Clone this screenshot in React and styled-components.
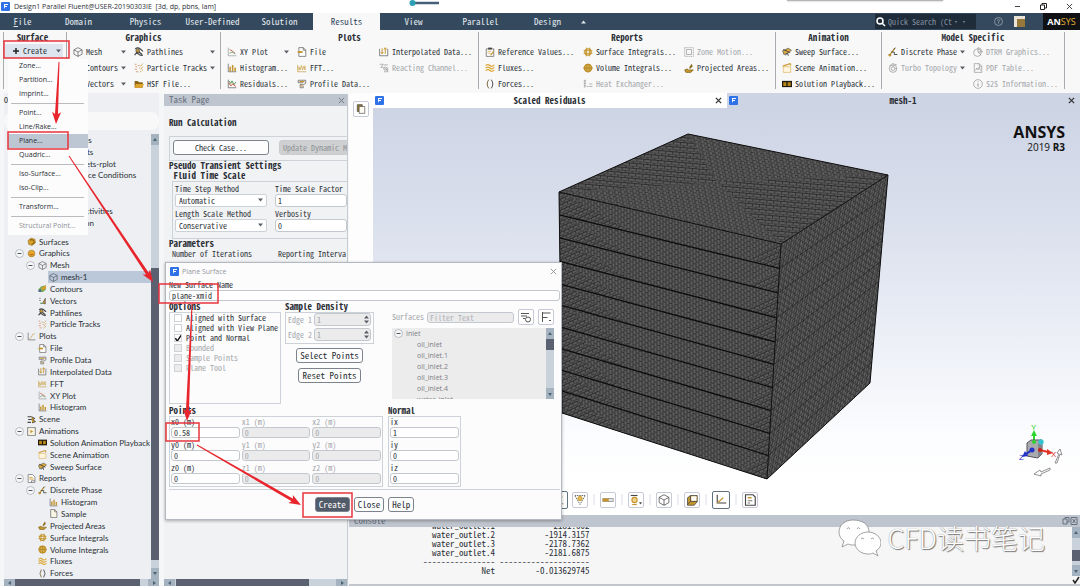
import React from "react";
import styled, { createGlobalStyle, ThemeProvider, css } from "styled-components";

const theme = {
  mono: '"Noto Sans Mono CJK SC", "Liberation Mono", monospace',
  sans: '"Open Sans", "Noto Sans", sans-serif',
  tree: 'Lato, "Open Sans", sans-serif',
  navy: "#34495e",
  text: "#2b2f36",
  muted: "#a3a6aa",
  line: "#cdd1d8",
  bar: "#bfc5ce",
  panel: "#edeff2",
  thumb: "#5b6171",
};

const GlobalStyle = createGlobalStyle`
  * { box-sizing: border-box; }
  body { margin: 0; background: #f5f6f8; overflow: hidden; }
  button, input, select { font: inherit; color: inherit; margin: 0; }
  fieldset { margin: 0; padding: 0; border: 0; min-width: 0; }
  svg { display: block; flex: none; }
`;

const Page = styled.div`
  position: relative;
  display: flex;
  flex-direction: column;
  min-height: 100vh;
  font-family: ${p => p.theme.mono};
  font-size: 8px;
  line-height: 10px;
  color: ${p => p.theme.text};
`;

/* ---------- icons ---------- */

const G = "#c4952e";
const K = "#454545";

const Bars = (
  <>
    <path d="M2 1v13h13" stroke={K} />
    <path d="M5 13V6M9 13V3M13 13V7" stroke={G} strokeWidth="2.5" />
  </>
);
const Cube = <path d="M8 1l6.500 3.500v7L8 15l-6.500-3.500v-7zM1.500 4.500L8 8l6.500-3.500M8 8v7" stroke={K} />;

const drawings = {
  mesh: Cube,
  pathlines: (
    <>
      <path d="M2 3q4-3 8 0t4 4" stroke={K} strokeWidth="2" />
      <path d="M1 13q3-5 6-2t7 2" stroke={K} strokeWidth="2" />
      <circle cx="6" cy="6" r="3" fill={G} stroke={K} />
      <path d="M8 8l5 4M3 10l3-2" stroke={K} strokeWidth="2" />
    </>
  ),
  tracks: (
    <>
      <path d="M1 2h3M6 4h3M2 6h3M1 10h4M8 8h2M3 14h4" stroke="#d9a07c" strokeWidth="1.500" />
      <path d="M14 1l-4 5M14 6l-3 4M14 11l-5 4" stroke={G} strokeWidth="1.500" strokeDasharray="2 1" />
    </>
  ),
  folder: (
    <>
      <path d="M1 3h5l2 2h6v9H1z" fill="#8a6412" />
      <path d="M3 8h13l-3 6H1z" fill="#e0a52c" />
    </>
  ),
  xy: (
    <>
      <path d="M2 1v13h13" stroke="#8b8b8b" />
      <path d="M4 4l4 2 5 4" stroke="#cf6a5c" strokeWidth="1.500" />
      <path d="M4 10l4-2 5 3" stroke="#7aa37a" strokeWidth="1.500" />
    </>
  ),
  axes: (
    <>
      <path d="M2 1v13h13" stroke={K} />
      <path d="M4 12l4-3 2-5 4-1" stroke={G} />
    </>
  ),
  triad: (
    <>
      <path d="M3 1v11h12" stroke={K} strokeWidth="1.500" />
      <path d="M3 12l8-7" stroke={G} strokeWidth="1.500" />
    </>
  ),
  hist: Bars,
  resid: (
    <>
      <path d="M2 1v13h13" stroke={K} />
      <path d="M3 3l3 4 2-4 3 6 3-4" stroke="#4f8f4f" strokeWidth="1.500" />
      <path d="M3 6l3 5 3-3 5 4" stroke="#cc4a3b" strokeWidth="1.500" />
    </>
  ),
  file: (
    <>
      <path d="M3 1h7l4 4v10H3z" fill="#fff" stroke={K} />
      <path d="M10 1v4h4" stroke={K} />
      <path d="M1 8h8" stroke={G} strokeWidth="3" />
    </>
  ),
  sample: (
    <>
      <path d="M3 1h7l4 4v10H3z" fill="#fbf7e6" stroke={K} />
      <path d="M10 1v4h4" stroke={K} />
    </>
  ),
  fft: (
    <>
      <path d="M1 3v11h14" stroke={G} />
      <path d="M3 12V6l2 5 2-7 2 7 2-6 2 6V4" stroke={G} />
    </>
  ),
  profile: (
    <>
      <path d="M2 2h12v5q-3 3-9 2M2 2v4h8M5 9v5h5v-3" stroke={K} />
      <path d="M4 4h8M6 11h3" stroke={G} strokeWidth="2" />
    </>
  ),
  interp: (
    <>
      <path d="M1 3v11h13V3" stroke={K} />
      <path d="M5 2v8M3 8l2 3 2-3M10 2v9M8 4l2-3 2 3" stroke={G} strokeWidth="1.500" />
    </>
  ),
  react: (
    <>
      <path d="M1 2h6l-4 5h4M8 3h6M8 7l6 6M14 7v7H8" stroke={K} />
      <circle cx="10" cy="9" r="2.500" stroke={K} />
    </>
  ),
  clipboard: (
    <>
      <path d="M2 3h12v12H2z" fill="#fff" stroke={K} />
      <path d="M5 1h6v3H5z" fill={K} />
      <path d="M4 7h6M4 10h5" stroke={G} />
      <path d="M9 13l5-6" stroke={G} strokeWidth="2" />
    </>
  ),
  fluxes: <path d="M1 4q4-3 7 0t7-1M1 8q4-3 7 0t7-1M1 12q4-3 7 0t7-1" stroke="#dca93c" strokeWidth="2" />,
  forces: (
    <>
      <path d="M6 1Q1 8 6 15" stroke="#776336" strokeWidth="1.500" />
      <path d="M10 1q5 7 0 14" stroke={K} strokeWidth="1.500" />
    </>
  ),
  surfInt: (
    <>
      <circle cx="8" cy="8" r="5" stroke={G} strokeWidth="2" />
      <path d="M6 1L5 15M11 1l-1 14M1 6h14M1 10h14" stroke={G} strokeWidth="1.500" />
    </>
  ),
  volInt: (
    <>
      <circle cx="8" cy="8" r="6" fill="#e3b651" stroke={G} strokeWidth="2" />
      <path d="M5 2v12M8 1v14M11 2v12M0 8h16" stroke="#a07a1d" />
    </>
  ),
  heat: <path d="M3 1v13M1 3h4M1 7h4M1 11h4M6 12h3M10 8h5M10 12h5" stroke={K} />,
  zone: (
    <>
      <path d="M1 1h14v14H1z" stroke={K} strokeDasharray="2 1" />
      <path d="M4 4h8v8H4z" stroke={K} />
    </>
  ),
  area: (
    <>
      <path d="M1 11q5-3 6 0h8l-4 4H3z" fill={G} stroke="#74570f" />
      <path d="M12 1l2 4-4 4-2-1z" fill="#8a6a1c" />
    </>
  ),
  sweep: (
    <>
      <path d="M1 6l9-4 5 3-4 4-8 3z" fill="#dba93f" stroke={K} />
      <path d="M2 4l11 5M5 13l4-3 1 4" stroke={K} strokeWidth="1.500" />
    </>
  ),
  sceneAnim: (
    <>
      <path d="M2 6h12v9H2z" fill="#fff5dd" stroke="#dcae5a" />
      <path d="M1 5l12-4 1 3" stroke="#d29c38" strokeWidth="2" />
    </>
  ),
  playback: (
    <>
      <path d="M0 3h16v10H0z" fill="#1e1a10" />
      <path d="M2 5h5v6H2zM9 5h5v6H9z" fill="#b88617" />
      <path d="M0 4h16M0 12h16" stroke="#1e1a10" strokeDasharray="1 1" />
    </>
  ),
  discrete: (
    <>
      <path d="M2 14l5-7 4-5" stroke={G} strokeWidth="2" />
      <path d="M1 12h4M5 8h5v4h5M9 4l3-3" stroke={K} strokeWidth="1.500" />
      <circle cx="3" cy="13" r="2" fill={G} />
    </>
  ),
  turbo: (
    <>
      <circle cx="8" cy="9" r="6" stroke={K} />
      <circle cx="8" cy="9" r="3" stroke={K} />
      <path d="M2 5l5-4 7 2M8 3v3M14 9h-3" stroke={K} />
    </>
  ),
  pie: (
    <>
      <circle cx="7" cy="9" r="6" stroke={K} />
      <path d="M8 8V1q6 1 7 7H8l5 5" stroke={K} />
    </>
  ),
  pdf: (
    <>
      <path d="M2 1h8l4 4v10H2z" stroke={K} />
      <path d="M4 12l2-4 2 3 2-5 2 6M10 1v4h4" stroke={K} />
    </>
  ),
  info: (
    <>
      <circle cx="8" cy="8" r="7" stroke={K} />
      <path d="M8 7v5M8 4v1" stroke={K} strokeWidth="1.500" />
    </>
  ),
  surfaces: (
    <>
      <path d="M2 6l5-4 7 2 1 6-6 5-6-2z" fill="#dca22e" stroke="#8b6410" />
      <path d="M5 6q4-3 7 1t-4 6" stroke="#8b6410" strokeWidth="2" />
    </>
  ),
  graphics: (
    <>
      <circle cx="8" cy="8" r="6" fill="#e9a626" stroke="#96752f" />
      <path d="M4 9q4 5 9 0" fill="#b96c2c" />
    </>
  ),
  contours: (
    <>
      <path d="M1 14V9l5-5 8-2v8l-5 4z" fill="#7fae5a" />
      <path d="M6 7l8-5v6l-5 3z" fill="#dd9c2a" />
      <path d="M1 14v-4l4-1 1 5z" fill="#4b6d8f" />
    </>
  ),
  vectors: (
    <>
      <path d="M2 4h3M2 8h3M8 13l5-9v10z" fill={G} stroke={K} />
      <path d="M4 13h4" stroke="#5b9055" strokeWidth="2" />
    </>
  ),
  scene: (
    <>
      <path d="M1 3h7M2 8h8M1 13h6" stroke={K} strokeWidth="2" />
      <path d="M8 3l6 3-3 2 4 4-6 2" fill={G} stroke={K} strokeWidth="1.500" />
    </>
  ),
  animations: (
    <>
      <path d="M1 1h14v14H1z" fill="#fbf7e6" stroke={K} />
      <path d="M6 5l5 3-5 3z" fill={G} />
      <path d="M3 2v12M13 2v12" stroke="#999" strokeDasharray="1 2" />
    </>
  ),
  reports: (
    <>
      <path d="M2 1h8l4 4v10H2z" fill="#fff" stroke={K} />
      <path d="M4 6h6M4 9h8" stroke={G} strokeWidth="1.500" />
      <path d="M8 15v-3h6" stroke={K} />
    </>
  ),
  funnel: (
    <>
      <path d="M1 2h14L8 14z" stroke={K} strokeDasharray="2 1" />
      <circle cx="8" cy="6" r="3" fill="#e3b651" stroke={G} />
    </>
  ),
  ruler: (
    <>
      <path d="M1 6h14v4H1z" fill="#e4e4e4" stroke="#888" />
      <path d="M1 6h8v4H1z" fill={G} />
    </>
  ),
  probe: (
    <>
      <path d="M1 2h9" stroke={K} strokeWidth="1.500" />
      <circle cx="6" cy="8" r="3.500" fill="#f2d38e" stroke={G} strokeWidth="1.500" />
      <path d="M3 14h6" stroke={G} strokeWidth="1.500" />
      <path d="M12 11l4 0-2 3z" fill={K} />
    </>
  ),
  solid: (
    <>
      <path d="M2 5l4-3h9v8l-4 5H2z" fill={G} stroke={K} />
      <path d="M6 2v8h9M6 10l-4 4" stroke={K} />
      <path d="M7 3h7v6H7z" fill="#fff" />
    </>
  ),
  legend: (
    <>
      <path d="M2 1h10l3 3v11H2z" fill="#fff" stroke={K} strokeWidth="1.500" />
      <path d="M5 5h5" stroke={G} strokeWidth="2" />
      <path d="M5 9h6M5 12h3" stroke={K} />
    </>
  ),
  pages: (
    <>
      <path d="M2 1h8v11H2z" fill="#8f7332" stroke={K} />
      <path d="M5 4h9v11H5z" fill="#fdfaf0" stroke={K} />
    </>
  ),
};

const Icon = ({ name, size = 10, dim }) => (
  <svg width={size} height={size} viewBox="0 0 16 16" fill="none" strokeWidth="1" opacity={dim ? 0.6 : 1} aria-hidden="true">
    {drawings[name]}
  </svg>
);

const AppIcon = ({ size = 9 }) => (
  <svg width={size} height={size} viewBox="0 0 9 9" aria-hidden="true">
    <rect width="9" height="9" rx="1" fill="#2f72e8" />
    <path d="M3 2h4v1H4v1h2v1H4l-1 2z" fill="#fff" />
  </svg>
);

const Caret = ({ up, color = "#5a5f66" }) => (
  <svg width="5" height="4" viewBox="0 0 5 4" aria-hidden="true">
    <path d={up ? "M0 3.500h5L2.500.5z" : "M0 .5h5L2.500 3.500z"} fill={color} />
  </svg>
);

const Cross = ({ size = 7, color = "#333", weight = 1 }) => (
  <svg width={size} height={size} viewBox="0 0 8 8" aria-hidden="true">
    <path d="M1 1l6 6M7 1L1 7" stroke={color} strokeWidth={weight} />
  </svg>
);

/* ---------- title bar and tabs ---------- */

const TitleBar = styled.header`
  display: flex;
  align-items: center;
  gap: 4px;
  height: 13px;
  padding: 0 7px 0 1px;
  background: #fff;
  font-family: ${p => p.theme.sans};
  font-size: 7px;
  white-space: pre;
`;

const Spring = styled.div`
  flex: 1;
`;

const WindowButtons = styled.div`
  display: flex;
  gap: 19px;
`;

const BareButton = styled.button`
  display: flex;
  align-items: center;
  justify-content: center;
  padding: 0;
  border: 0;
  background: none;
`;

const Progress = styled.div`
  position: absolute;
  top: 0;
  left: 409px;
`;

const TopEdge = styled.div`
  position: absolute;
  top: 0;
  right: 137px;
  width: 156px;
  height: 1px;
  background: #b5b5b5;
  box-shadow: 0 0 2px #999;
`;

const TabBar = styled.nav`
  display: flex;
  align-items: stretch;
  height: 17px;
  background: ${p => p.theme.navy};
  color: #e3e9ef;
  font-size: 9px;
`;

const Tab = styled.button`
  width: ${p => (p.$first ? "45px" : "67px")};
  padding: 0;
  border: 0;
  border-radius: 0;
  background: ${p => (p.$active ? "#f8f8f9" : "none")};
  color: ${p => (p.$active ? p.theme.navy : "inherit")};
  &:first-letter {
    text-decoration: ${p => (p.$first ? "underline" : "none")};
  }
`;

const Search = styled.label`
  display: flex;
  align-items: center;
  gap: 2px;
  width: 101px;
  margin: 1px 3px 1px 0;
  padding: 0 1px;
  background: #1e2c3a;
  font-size: 8px;
  input {
    width: 80px;
    height: 12px;
    padding: 0;
    border: 0;
    background: none;
    outline: none;
  }
  input::placeholder {
    color: #8592a0;
  }
`;

const TabTools = styled.div`
  display: flex;
  align-items: center;
  gap: 11px;
  padding: 0 18px 0 15px;
`;

const Brand = styled.div`
  display: flex;
  align-items: center;
  justify-content: center;
  width: 37px;
  background: #101114;
  color: #fff;
  font: bold 9px ${p => p.theme.sans};
  b {
    color: #e2ad35;
    font-weight: 400;
  }
`;

/* ---------- ribbon ---------- */

const RibbonBar = styled.div`
  display: flex;
  height: 63px;
  padding: 2px 0 4px 3px;
  background: #f8f8f9;
`;

const Group = styled.section`
  flex: ${p => p.$size} 1 ${p => p.$size}px;
  min-width: 0;
  padding-left: ${p => (p.$tight ? "1px" : "6px")};
  border-left: 1px solid #a8abb0;
  white-space: nowrap;
`;

const GroupTitle = styled.h2`
  height: 12px;
  margin: 0;
  padding-right: 6px;
  font-size: 9px;
  font-weight: bold;
  line-height: 12px;
  text-align: center;
`;

const Columns = styled.div`
  display: grid;
  grid-template-columns: ${p => p.$cols};
`;

const Command = styled.button`
  display: flex;
  align-items: center;
  gap: 3px;
  width: 100%;
  height: 16px;
  padding: 0 8px 0 0;
  border: 0;
  background: none;
  color: ${p => (p.disabled ? p.theme.muted : p.theme.text)};
  svg:last-child:not(:first-child) {
    margin-left: auto;
  }
`;

const CreateCommand = styled(Command)`
  width: 58px;
  height: 14px;
  padding: 0 2px 0 7px;
  background: #dfe5ee;
`;

// label, icon, [menu | off]
const groups = [
  {
    title: "Graphics", size: 154, cols: "61px 1fr",
    columns: [
      [["Mesh", "mesh", "menu"], ["Contours", "contours", "menu"], ["Vectors", "vectors", "menu"]],
      [["Pathlines", "pathlines", "menu"], ["Particle Tracks", "tracks", "menu"], ["HSF File...", "folder"]],
    ],
  },
  {
    title: "Plots", size: 258, cols: "70px 82px 1fr",
    columns: [
      [["XY Plot", "xy", "menu"], ["Histogram...", "hist"], ["Residuals...", "resid"]],
      [["File", "file"], ["FFT...", "fft"], ["Profile Data...", "profile"]],
      [["Interpolated Data...", "interp"], ["Reacting Channel...", "react", "off"]],
    ],
  },
  {
    title: "Reports", size: 297, cols: "98px 101px 1fr",
    columns: [
      [["Reference Values...", "clipboard"], ["Fluxes...", "fluxes"], ["Forces...", "forces"]],
      [["Surface Integrals...", "surfInt"], ["Volume Integrals...", "volInt"], ["Heat Exchanger...", "heat", "off"]],
      [["Zone Motion...", "zone", "off"], ["Projected Areas...", "area"]],
    ],
  },
  {
    title: "Animation", size: 106, cols: "1fr",
    columns: [[["Sweep Surface...", "sweep"], ["Scene Animation...", "sceneAnim"], ["Solution Playback...", "playback"]]],
  },
  {
    title: "Model Specific", size: 183, cols: "85px 1fr",
    columns: [
      [["Discrete Phase", "discrete", "menu"], ["Turbo Topology", "turbo", "menu off"]],
      [["DTRM Graphics...", "pie", "off"], ["PDF Table...", "pdf", "off"], ["S2S Information...", "info", "off"]],
    ],
  },
];

const Ribbon = () => (
  <RibbonBar>
    <Group $size={63} $tight>
      <GroupTitle>Surface</GroupTitle>
      <CreateCommand>
        <svg width="8" height="8" viewBox="0 0 8 8"><path d="M4 1v6M1 4h6" stroke="#222" strokeWidth="1.500" /></svg>
        Create
        <Caret />
      </CreateCommand>
    </Group>
    {groups.map(g => (
      <Group key={g.title} $size={g.size}>
        <GroupTitle>{g.title}</GroupTitle>
        <Columns $cols={g.cols}>
          {g.columns.map((col, i) => (
            <div key={i}>
              {col.map(([label, icon, flags = ""]) => (
                <Command key={label} disabled={flags.includes("off")}>
                  <Icon name={icon} dim={flags.includes("off")} />
                  {label}
                  {flags.includes("menu") && <Caret />}
                </Command>
              ))}
            </div>
          ))}
        </Columns>
      </Group>
    ))}
    <Group $size={16} />
  </RibbonBar>
);

/* ---------- create menu ---------- */

const Menu = styled.div`
  position: absolute;
  top: 59px;
  left: 8px;
  width: 80px;
  padding: 0 0 2px;
  background: #fcfcfd;
  font-family: ${p => p.theme.sans};
  font-size: 7px;
`;

const MenuItem = styled.button`
  display: block;
  width: 100%;
  height: 14px;
  padding: 0 0 0 11px;
  border: 0;
  background: ${p => (p.$active ? "#bcc7d3" : "none")};
  color: ${p => (p.disabled ? "#8f9296" : p.theme.text)};
  text-align: left;
  white-space: nowrap;
`;

const MenuLine = styled.hr`
  height: 1px;
  margin: 2px 4px 2px 3px;
  border: 0;
  background: #b9bbbe;
`;

const menuItems = [
  "Zone...", "Partition...", "Imprint...", "-", "Point...", "Line/Rake...", "Plane...", "Quadric...", "-",
  "Iso-Surface...", "Iso-Clip...", "-", "Transform...", "-", "Structural Point...",
];

const CreateMenu = () => (
  <Menu>
    {menuItems.map((item, i) =>
      item === "-"
        ? <MenuLine key={i} />
        : <MenuItem key={item} $active={item === "Plane..."} disabled={item === "Structural Point..."}>{item}</MenuItem>
    )}
  </Menu>
);

/* ---------- scrollbars ---------- */

const Track = styled.div`
  display: flex;
  flex-direction: ${p => (p.$row ? "row" : "column")};
  flex: none;
  ${p => (p.$row ? css`height: 8px;` : css`width: 8px;`)}
  background: #c9d1da;
`;

const TrackEnd = styled(BareButton)`
  flex: none;
  width: ${p => (p.$row ? "11px" : "8px")};
  height: ${p => (p.$row ? "8px" : "11px")};
  background: #a4b3bf;
`;

const Thumb = styled.div`
  flex: ${p => p.$size};
  background: ${p => p.theme.thumb};
`;

const Slack = styled.div`
  flex: ${p => p.$size};
`;

const Tip = ({ d }) => (
  <svg width="4" height="4" viewBox="0 0 4 4" aria-hidden="true"><path d={d} fill="#4c6474" /></svg>
);

const Scrollbar = ({ row, before, thumb, after }) => (
  <Track $row={row}>
    <TrackEnd $row={row} type="button" aria-label="Back"><Tip d={row ? "M3 0v4L0 2z" : "M0 3h4L2 0z"} /></TrackEnd>
    <Slack $size={before} />
    <Thumb $size={thumb} />
    <Slack $size={after} />
    <TrackEnd $row={row} type="button" aria-label="Forward"><Tip d={row ? "M1 0v4l3-2z" : "M0 1h4L2 4z"} /></TrackEnd>
  </Track>
);

/* ---------- outline tree ---------- */

const Body = styled.main`
  display: grid;
  grid-template-columns: 164px 185px 1fr;
  flex: 1;
  min-height: 0;
  border-bottom: 1px solid #4a4f57;
`;

const Outline = styled.aside`
  display: flex;
  flex-direction: column;
  min-width: 0;
  margin: 0 5px 0 4px;
  background: ${p => p.theme.panel};
`;

const OutlineTitle = styled.div`
  height: 19px;
  padding-top: 2px;
`;

const OutlineFilter = styled.input`
  width: 100%;
  height: 18px;
  margin-bottom: 4px !important;
  padding: 0 6px;
  border: 0;
  border-radius: 8px;
  background: #f8f8f9;
`;

const OutlineMain = styled.div`
  display: flex;
  flex: 1;
  min-height: 0;
`;

const Tree = styled.div`
  display: flex;
  flex-direction: column;
  flex: 1;
  min-width: 0;
  font-family: ${p => p.theme.tree};
  font-size: 8px;
  white-space: nowrap;
  overflow: hidden;
`;

const TreeGap = styled.div`
  flex: 7;
`;

const TreeRow = styled.div`
  display: flex;
  align-items: center;
  flex: 12;
  gap: 3px;
  min-height: 0;
  margin-left: ${p => 11 + p.$depth * 11}px;
  ${p => p.$selected && css`
    margin-left: ${11 + (p.$depth + 1) * 11}px;
    padding-left: 1px;
    background: #bac8d9;
  `}
`;

const Toggle = styled.span`
  display: flex;
  flex: none;
  width: 9px;
`;

const Minus = ({ size = 9 }) => (
  <svg width={size} height={size} viewBox="0 0 9 9" aria-hidden="true">
    <circle cx="4.500" cy="4.500" r="4" fill="#f6f7f8" stroke="#a2a8b0" strokeWidth=".7" />
    <path d="M2.500 4.500h4" stroke="#555" />
  </svg>
);

const upperRows = [
  [1, "Report Files"], [1, "Report Plots"], [3, "outlets-rplot"], [1, "Convergence Conditions"],
  [0, ""], [0, ""], [0, "Calculation Activities"], [0, "Run Calculation"],
];

const lowerRows = [
  [0, "Surfaces", "surfaces"],
  [0, "Graphics", "graphics", true],
  [1, "Mesh", "mesh", true],
  [2, "mesh-1", "mesh"],
  [1, "Contours", "contours"],
  [1, "Vectors", "vectors"],
  [1, "Pathlines", "pathlines"],
  [1, "Particle Tracks", "tracks"],
  [0, "Plots", "axes", true],
  [1, "File", "file"],
  [1, "Profile Data", "profile"],
  [1, "Interpolated Data", "interp"],
  [1, "FFT", "fft"],
  [1, "XY Plot", "xy"],
  [1, "Histogram", "hist"],
  [0, "Scene", "scene"],
  [0, "Animations", "animations", true],
  [1, "Solution Animation Playback", "playback"],
  [1, "Scene Animation", "sceneAnim"],
  [1, "Sweep Surface", "sweep"],
  [0, "Reports", "reports", true],
  [1, "Discrete Phase", "discrete", true],
  [2, "Histogram", "hist"],
  [2, "Sample", "sample"],
  [1, "Projected Areas", "area"],
  [1, "Surface Integrals", "surfInt"],
  [1, "Volume Integrals", "volInt"],
  [1, "Fluxes", "fluxes"],
  [1, "Forces", "forces"],
];

const renderRow = ([depth, label, icon, open], i) => {
  const selected = label === "mesh-1";
  return (
    <TreeRow key={i} $depth={depth} $selected={selected}>
      {!selected && <Toggle>{open && <Minus />}</Toggle>}
      <Icon name={icon} size={9} />
      {label}
    </TreeRow>
  );
};

/* ---------- task page ---------- */

const Task = styled.section`
  display: flex;
  flex-direction: column;
  min-width: 0;
  margin: 1px 1px 0 0;
  background: #f1f2f4;
  border-right: 1px solid #c6cbd2;
  white-space: nowrap;
  overflow: hidden;
`;

const PanelBar = styled.div`
  display: flex;
  align-items: center;
  justify-content: space-between;
  flex: none;
  height: 12px;
  padding: 0 2px 0 5px;
  background: ${p => p.theme.bar};
  color: #667180;
  font-size: 9px;
`;

const TaskBody = styled.div`
  flex: 1;
  min-width: 0;
  padding: 12px 0 0 5px;
  overflow: hidden;
`;

const Heading = styled.h3`
  height: 10px;
  margin: 0;
  font-size: 9px;
  line-height: 10px;
  font-weight: bold;
`;

const Frame = styled.div`
  border: 1px solid ${p => p.theme.line};
  border-right-width: ${p => (p.$open ? 0 : "1px")};
`;

const CaseRow = styled(Frame)`
  display: flex;
  gap: 10px;
  margin-top: 8px;
  padding: 3px 0 5px 3px;
`;

const Button = styled.button`
  height: 15px;
  padding: 0 3px;
  border: 1px solid #7d838d;
  border-radius: 3px;
  background: ${p => (p.$primary ? "#515b69" : "#fdfdfd")};
  color: ${p => (p.$primary ? "#fff" : p.theme.text)};
  font-size: ${p => (p.$small ? "8px" : "9px")};
  line-height: 12px;
  white-space: nowrap;
  &:disabled {
    border-color: #c9cbce;
    background: #cfd0d2;
    color: #8e9195;
  }
`;

const WideButton = styled(Button)`
  flex: 0 0 96px;
`;

const SettingsFrame = styled(Frame)`
  display: grid;
  grid-template-columns: 92px 1fr;
  column-gap: 8px;
  margin-left: 3px;
  padding: 1px 0 5px 2px;
`;

const Field = styled.label`
  display: flex;
  flex-direction: column;
  min-width: 0;
  height: 25px;
  line-height: 11px;
  color: ${p => (p.$off ? p.theme.muted : "inherit")};
`;

const SelectBox = styled.span`
  position: relative;
  display: block;
  select {
    appearance: none;
    width: 100%;
    height: 13px;
    padding: 0 3px;
    border: 1px solid ${p => p.theme.line};
    border-radius: 2px;
    background: #fff;
  }
  svg {
    position: absolute;
    top: 4px;
    right: 4px;
  }
`;

const TextBox = styled.input`
  width: 100%;
  min-width: 0;
  height: ${p => (p.$tall ? "13px" : "11px")};
  padding: 0 2px;
  border: 1px solid #c3c7ce;
  border-radius: 3px;
  background: #fff;
  line-height: 9px;
  outline: none;
  &:disabled {
    background: #ebebec;
    color: ${p => p.theme.muted};
  }
  &::placeholder {
    color: #b0b2b5;
  }
`;

const ParamRow = styled.div`
  display: grid;
  grid-template-columns: 106px 1fr;
  padding-left: 3px;
`;

const TaskPage = () => (
  <Task>
    <PanelBar>Task Page<Cross color="#667180" /></PanelBar>
    <TaskBody>
      <Heading>Run Calculation</Heading>
      <CaseRow $open>
        <WideButton $small>Check Case...</WideButton>
        <WideButton $small disabled>Update Dynamic Mesh...</WideButton>
      </CaseRow>
      <Heading>Pseudo Transient Settings</Heading>
      <Heading as="h4">&nbsp;Fluid Time Scale</Heading>
      <SettingsFrame $open>
        <Field>
          Time Step Method
          <SelectBox><select defaultValue="Automatic"><option>Automatic</option></select><Caret /></SelectBox>
        </Field>
        <Field>Time Scale Factor<TextBox $tall defaultValue="1" /></Field>
        <Field>
          Length Scale Method
          <SelectBox><select defaultValue="Conservative"><option>Conservative</option></select><Caret /></SelectBox>
        </Field>
        <Field>Verbosity<TextBox $tall defaultValue="0" /></Field>
      </SettingsFrame>
      <Heading>Parameters</Heading>
      <ParamRow><span>Number of Iterations</span><span>Reporting Interval</span></ParamRow>
    </TaskBody>
    <Scrollbar row before={1} thumb={132} after={27} />
  </Task>
);

/* ---------- graphics view ---------- */

const Right = styled.section`
  display: flex;
  flex-direction: column;
  min-width: 0;
`;

const ViewRow = styled.div`
  display: flex;
  flex: 1;
  min-height: 0;
`;

const SideTools = styled.div`
  flex: none;
  width: 24px;
  padding: 8px 0 0 4px;
  background: #fdfdfe;
`;

const ToolButton = styled.button`
  display: flex;
  align-items: center;
  justify-content: center;
  width: ${p => (p.$active ? "18px" : "16px")};
  height: ${p => (p.$active ? "18px" : "16px")};
  padding: 0;
  border: 1px solid ${p => (p.$active ? "#5f7280" : "#c5cad6")};
  border-radius: 2px;
  background: #fff;
`;

const Viewer = styled.div`
  display: flex;
  flex-direction: column;
  flex: 1;
  min-width: 0;
  background: linear-gradient(#cdd4e4 14px, #dce1ee 140px, #fbfcfe 340px, #fff 390px);
`;

const Titles = styled.div`
  display: grid;
  grid-template-columns: 354px 1fr;
  height: 15px;
`;

const WindowTitle = styled.div`
  display: flex;
  align-items: center;
  justify-content: space-between;
  padding: 0 5px 0 2px;
  background: ${p => (p.$light ? "#fff" : "none")};
  font-size: 9px;
  font-weight: bold;
`;

const Stage = styled.div`
  display: flex;
  flex: 1;
  justify-content: flex-end;
  min-height: 0;
  overflow: hidden;
`;

const ViewTools = styled.div`
  display: flex;
  align-items: center;
  gap: 5px;
  height: 31px;
  padding: 0 0 0 177px;
  background: #fff;
`;

const Pair = styled.div`
  display: flex;
  align-items: center;
  gap: 4px;
`;

const Divider = styled.i`
  width: 2px;
  height: 11px;
  background: #eceef2;
`;

const lerp = (a, b, t) => a.map((v, i) => v + (b[i] - v) * t);
const pts = list => list.map(p => p.join(",")).join(" ");
const left = [559, 192];
const back = [688, 134];
const rightTop = [888, 175];
const front = [781, 244];
const frontLow = [767, 479];
const rightLow = [870, 383];
const leftLow = [562, 413];
const middle = [717, 182];
const levels = [0.104, 0.208, 0.314, 0.417, 0.512, 0.611, 0.709, 0.806, 0.9];

const MeshScene = () => (
  <svg width="707" height="376" viewBox="373 108 707 376" role="img" aria-label="Meshed block">
    <defs>
      <pattern id="faceLeft" width="6" height="10" patternUnits="userSpaceOnUse" patternTransform="skewY(13)">
        <rect width="6" height="10" fill="#5d5d5d" />
        <path d="M0 0v10M3 0v10M6 0v10M0 1h3M0 6h3M3 3.500h3M3 8.500h3" stroke="#2c2c2c" strokeWidth=".8" />
      </pattern>
      <pattern id="faceRight" width="5" height="5" patternUnits="userSpaceOnUse" patternTransform="skewY(-39) rotate(12)">
        <rect width="5" height="5" fill="#5d5d5d" />
        <path d="M0 0v5M2.500 0v5M0 1h2.500M2.500 3.500h2.500" stroke="#262626" strokeWidth=".8" />
      </pattern>
      <pattern id="topA" width="6" height="8" patternUnits="userSpaceOnUse" patternTransform="skewX(8) rotate(-4)">
        <rect width="6" height="8" fill="#5e5e5e" />
        <path d="M0 0v8M3 0v8M0 1h3M0 5h3M3 3h3M3 7h3" stroke="#2c2c2c" strokeWidth=".8" />
      </pattern>
      <pattern id="topB" width="7" height="5" patternUnits="userSpaceOnUse" patternTransform="rotate(5)">
        <rect width="7" height="5" fill="#5a5a5a" />
        <path d="M0 0h7M0 2.500h7M1 0v2.500M4.500 2.500v2.500" stroke="#262626" strokeWidth=".8" />
      </pattern>
      <pattern id="fine" width="5" height="5" patternUnits="userSpaceOnUse" patternTransform="rotate(-25)">
        <rect width="5" height="5" fill="#5a5a5a" />
        <path d="M0 0h5M0 2.500h5M1 0v2.500M3.500 2.500v2.500" stroke="#262626" strokeWidth=".8" />
      </pattern>
    </defs>
    <polygon points={pts([left, back, rightTop, rightLow, frontLow, leftLow])} fill="#484848" />
    <polygon points={pts([left, front, frontLow, leftLow])} fill="url(#faceLeft)" />
    {[0, ...levels].map((t, i) => {
      const next = levels[i] || 1;
      const a = lerp(left, leftLow, t);
      const b = lerp(left, leftLow, next);
      const c = lerp(b, lerp(front, frontLow, next), 0.34);
      const d = lerp(front, frontLow, t);
      const e = lerp(front, frontLow, next);
      const f = lerp(e, b, 0.14);
      return (
        <g key={t} fill="url(#fine)">
          <polygon points={pts([a, b, c])} />
          <polygon points={pts([d, e, f])} />
        </g>
      );
    })}
    <polygon points={pts([front, rightTop, rightLow, frontLow])} fill="url(#faceRight)" />
    <polygon points={pts([back, rightTop, middle])} fill="url(#topA)" />
    <polygon points={pts([left, front, middle])} fill="url(#topA)" />
    <polygon points={pts([left, back, middle])} fill="url(#topB)" />
    <polygon points={pts([front, rightTop, middle])} fill="url(#topB)" />
    {levels.map(t => (
      <g key={t} fill="none" stroke="#0d0d0d">
        <polyline points={pts([lerp(left, leftLow, t), lerp(front, frontLow, t)])} strokeWidth="1.300" />
        <polyline points={pts([lerp(front, frontLow, t), lerp(rightTop, rightLow, t)])} opacity=".4" />
      </g>
    ))}
    <g fill="none" stroke="#111">
      <polygon points={pts([left, back, rightTop, front])} />
      <polyline points={pts([left, leftLow, frontLow, rightLow, rightTop])} />
      <polyline points={pts([front, frontLow])} />
    </g>
    <g fontFamily='"Open Sans", sans-serif' textAnchor="end" fill="#111">
      <text x="1065" y="138" fontSize="16" fontWeight="bold">ANSYS</text>
      <text x="1065" y="151" fontSize="10">2019 <tspan fontWeight="bold">R3</tspan></text>
    </g>
    <g fontFamily='"Liberation Sans", sans-serif' fontSize="8">
      <path d="M1034 444v-9" stroke="#2fd52f" strokeWidth="2" />
      <path d="M1034 430l-3 6h6z" fill="#2fd52f" />
      <text x="1031" y="430" fill="#2fd52f">Y</text>
      <path d="M1027 443l4-3h11v14l-4 4-11-2z" fill="#a9a9ae" stroke="#55555b" />
      <path d="M1038 444l4-4v14l-4 4z" fill="#84848c" />
      <path d="M1040 450l8 2" stroke="#e03328" strokeWidth="2" />
      <path d="M1053 453l-6-4v6z" fill="#e03328" />
      <text x="1051" y="457" fill="#e03328">X</text>
      <circle cx="1040" cy="450" r="2" fill="#c9221a" />
      <path d="M1032 450l-6 4" stroke="#2233c8" strokeWidth="2" />
      <path d="M1022 457l3-6 3 5z" fill="#2233c8" />
      <text x="1019" y="460" fill="#2233c8">Z</text>
      <circle cx="1032" cy="450" r="2.500" fill="#2233c8" />
      <circle cx="1034" cy="442" r="2" fill="#2fd52f" />
      <circle cx="1041" cy="442" r="2.700" fill="#35c3cf" />
      <path d="M1055 463l4-9-2-1 3-4 2 6-2-1-3 9zM1050 468l-9 4-1-2-6 4 7 2v-2l9-4z" fill="#fff" stroke="#777" strokeWidth=".8" />
    </g>
  </svg>
);

const viewTools = ["ruler", "probe", "mesh", "solid", "triad", "legend"];

/* ---------- console ---------- */

const Console = styled.section`
  display: flex;
  flex-direction: column;
  height: 72px;
  border-bottom: 3px solid #c3c7cd;
`;

const ConsoleMain = styled.div`
  display: flex;
  flex: 1;
  min-height: 0;
  background: #f6f6f7;
`;

const Output = styled.pre`
  display: flex;
  flex-direction: column;
  justify-content: flex-end;
  flex: 1;
  margin: 0;
  padding: 0 0 9px 74px;
  overflow: hidden;
  font-family: ${p => p.theme.mono};
  font-size: 9px;
  line-height: 9px;
`;

const ConsoleEdge = styled.div`
  display: flex;
  flex-direction: column;
  ${Track} {
    flex: 1;
  }
`;

const output = [
  ["water_outlet.1", "2181.602"],
  ["water_outlet.2", "-1914.3157"],
  ["water_outlet.3", "-2178.7362"],
  ["water_outlet.4", "-2181.6875"],
  ["-".repeat(16), "-".repeat(20)],
  ["Net", "-0.013629745"],
].map(([name, value]) => name.padStart(16) + " " + value.padStart(20)).join("\n");

/* ---------- plane surface dialog ---------- */

const Dialog = styled.form`
  position: absolute;
  top: 262px;
  left: 165px;
  width: 397px;
  height: 258px;
  border: 1px solid #b4b9c1;
  background: #fcfcfd;
  box-shadow: 0 1px 3px rgba(0, 0, 0, 0.3);
  white-space: nowrap;
`;

const DialogTitle = styled.div`
  display: flex;
  align-items: center;
  gap: 3px;
  height: 17px;
  padding: 0 4px;
  color: #95989d;
  font: 7px ${p => p.theme.sans};
`;

const DialogBody = styled.div`
  padding: 0 1px 0 3px;
`;

const NameField = styled.label`
  display: block;
  height: 22px;
  ${TextBox} {
    display: block;
  }
`;

const Upper = styled.div`
  display: grid;
  grid-template-columns: 112px 89px 1fr;
  column-gap: 4px;
  height: 104px;
`;

const OptionsFrame = styled(Frame)`
  height: 92px;
  padding: 0 0 0 4px;
`;

const Check = styled.label`
  display: flex;
  align-items: center;
  gap: 4px;
  height: 10px;
  color: ${p => (p.$off ? p.theme.muted : "inherit")};
  input {
    appearance: none;
    width: 8px;
    height: 8px;
    border: 1px solid #cfd2d6;
    background: ${p => (p.$off ? "#ececed" : "#fff")};
  }
  input:checked {
    background: #fff url("data:image/svg+xml,%3Csvg xmlns='http://www.w3.org/2000/svg' viewBox='0 0 8 8'%3E%3Cpath d='M1 4l2 3 4-6' fill='none' stroke='%23111' stroke-width='1.500'/%3E%3C/svg%3E") center / 7px no-repeat;
  }
`;

const DensityFrame = styled(Frame)`
  display: grid;
  gap: 2px;
  padding: 0 2px 2px;
`;

const Spin = styled.label`
  display: grid;
  grid-template-columns: 26px 1fr;
  align-items: center;
  height: 13px;
  color: ${p => p.theme.muted};
`;

const SpinBox = styled.span`
  position: relative;
  display: block;
  height: 13px;
  ${TextBox} {
    display: block;
  }
  span {
    position: absolute;
    top: 2px;
    right: 2px;
    display: grid;
    gap: 1px;
  }
`;

const PointButtons = styled.div`
  display: flex;
  flex-direction: column;
  align-items: center;
  gap: 5px;
  margin-top: 4px;
`;

const SurfacePane = styled.div`
  padding: 7px 6px 0 14px;
`;

const FilterRow = styled.div`
  display: flex;
  align-items: center;
  gap: 4px;
  color: ${p => p.theme.muted};
  label {
    display: flex;
    align-items: center;
    flex: 1;
    gap: 3px;
    min-width: 0;
  }
`;

const SurfaceList = styled.div`
  display: flex;
  height: 71px;
  margin-top: 3px;
  background: #ececed;
  color: #7c7f83;
  font: 7px/11px ${p => p.theme.sans};
  overflow: hidden;
`;

const Surfaces = styled.ul`
  flex: 1;
  margin: 0;
  padding: 0 0 0 25px;
  list-style: none;
`;

const SurfaceRoot = styled.li`
  display: flex;
  align-items: center;
  gap: 3px;
  margin-left: -23px;
`;

const Lower = styled.div`
  display: grid;
  grid-template-columns: 214px 73px;
  column-gap: 5px;
`;

const PointsFrame = styled(Frame)`
  display: grid;
  grid-template-columns: repeat(${p => p.$cols}, 1fr);
  column-gap: 2px;
  padding: 0 1px;
`;

const Cell = styled(Field)`
  height: 23px;
  line-height: 10px;
`;

const Actions = styled.div`
  display: flex;
  justify-content: center;
  gap: 4px;
  margin-top: 2px;
  padding-top: 7px;
  border-top: 1px solid ${p => p.theme.line};
`;

const options = [
  ["Aligned with Surface"], ["Aligned with View Plane"], ["Point and Normal", true],
  ["Bounded", false, true], ["Sample Points", false, true], ["Plane Tool", false, true],
];

const points = [
  ["x0 (m)", "0.58"], ["x1 (m)", "0", true], ["x2 (m)", "0", true],
  ["y0 (m)", "0"], ["y1 (m)", "0", true], ["y2 (m)", "0", true],
  ["z0 (m)", "0"], ["z1 (m)", "0", true], ["z2 (m)", "0", true],
];

const normal = [["ix", "1"], ["iy", "0"], ["iz", "0"]];

const renderCell = ([label, value, off]) => (
  <Cell key={label} $off={off}>{label}<TextBox defaultValue={value} disabled={off} /></Cell>
);

const PlaneDialog = () => (
  <Dialog onSubmit={e => e.preventDefault()}>
    <DialogTitle>
      <AppIcon />Plane Surface<Spring />
      <BareButton type="button" aria-label="Close"><Cross color="#8a8d92" /></BareButton>
    </DialogTitle>
    <DialogBody>
      <NameField>New Surface Name<TextBox defaultValue="plane-xmid" /></NameField>
      <Upper>
        <fieldset>
          <Heading>Options</Heading>
          <OptionsFrame>
            {options.map(([label, on, off]) => (
              <Check key={label} $off={off}>
                <input type="checkbox" defaultChecked={on} disabled={off} />{label}
              </Check>
            ))}
          </OptionsFrame>
        </fieldset>
        <fieldset>
          <Heading>Sample Density</Heading>
          <DensityFrame>
            {["Edge 1", "Edge 2"].map(edge => (
              <Spin key={edge}>
                {edge}
                <SpinBox>
                  <TextBox $tall defaultValue="1" disabled />
                  <span><Caret up /><Caret /></span>
                </SpinBox>
              </Spin>
            ))}
          </DensityFrame>
          <PointButtons>
            <Button type="button">Select Points</Button>
            <Button type="button">Reset Points</Button>
          </PointButtons>
        </fieldset>
        <SurfacePane>
          <FilterRow>
            <label>Surfaces<TextBox placeholder="Filter Text" disabled /></label>
            <ToolButton type="button" aria-label="Filter options">
              <svg width="12" height="12" viewBox="0 0 12 12" fill="none" stroke="#555">
                <path d="M1 2.500h8M1 5h6M3 7.500h2" /><circle cx="8" cy="8.500" r="2.500" />
              </svg>
            </ToolButton>
            <ToolButton type="button" aria-label="Select surfaces">
              <svg width="12" height="12" viewBox="0 0 12 12" fill="none" stroke="#555">
                <path d="M2.500 1v10M2.500 2h8M2.500 6.500h5M9 9.500h2" />
              </svg>
            </ToolButton>
          </FilterRow>
          <SurfaceList>
            <Surfaces>
              <SurfaceRoot><Minus />Inlet</SurfaceRoot>
              {["oil_inlet", "oil_inlet.1", "oil_inlet.2", "oil_inlet.3", "oil_inlet.4", "water_inlet"].map(s => (
                <li key={s}>{s}</li>
              ))}
            </Surfaces>
            <Scrollbar before={0} thumb={11} after={37} />
          </SurfaceList>
        </SurfacePane>
      </Upper>
      <Lower>
        <fieldset>
          <Heading>Points</Heading>
          <PointsFrame $cols={3}>{points.map(renderCell)}</PointsFrame>
        </fieldset>
        <fieldset>
          <Heading>Normal</Heading>
          <PointsFrame $cols={1}>{normal.map(renderCell)}</PointsFrame>
        </fieldset>
      </Lower>
      <Actions>
        <Button $primary>Create</Button>
        <Button type="button">Close</Button>
        <Button type="button">Help</Button>
      </Actions>
    </DialogBody>
  </Dialog>
);

/* ---------- marks drawn over the page ---------- */

const Overlay = styled.svg`
  position: absolute;
  top: 0;
  left: 0;
  pointer-events: none;
`;

const Watermark = styled.div`
  position: absolute;
  right: 35px;
  bottom: 31px;
  display: flex;
  align-items: center;
  gap: 7px;
  color: #fff;
  font: 27px/38px "Noto Sans CJK SC", sans-serif;
  font-weight: 300;
  text-shadow: 1px 1px 1px #777, 0 0 1px #888;
`;

const arrows = [
  [[59, 62], [56, 124]],
  [[69, 156], [153, 282]],
  [[192, 304], [187, 421]],
  [[197, 445], [301, 505]],
];

// thin at the tail, wider towards the head
const arrowPoints = ([[x1, y1], [x2, y2]]) => {
  const len = Math.hypot(x2 - x1, y2 - y1);
  const ux = (x2 - x1) / len;
  const uy = (y2 - y1) / len;
  const at = (back, side) => [x2 - ux * back - uy * side, y2 - uy * back + ux * side];
  return pts([at(len, 0.5), at(10, 1.5), at(12, 4.5), at(0, 0), at(12, -4.5), at(10, -1.5), at(len, -0.5)]);
};

const Marks = () => (
  <Overlay width="1080" height="586" viewBox="0 0 1080 586" aria-hidden="true">
    <g fill="none" stroke="#e8343c" strokeWidth="1.500">
      <rect x="4" y="41" width="65" height="17" />
      <rect x="8" y="132" width="60" height="17" />
      <rect x="159" y="284" width="59" height="19" />
      <rect x="166" y="423" width="33" height="18" />
      <rect x="303" y="493" width="49" height="24" />
    </g>
    {arrows.map((a, i) => <polygon key={i} points={arrowPoints(a)} fill="#e8252c" />)}
  </Overlay>
);

const tabs = ["File", "Domain", "Physics", "User-Defined", "Solution", "Results", "View", "Parallel", "Design"];

const App = () => (
  <ThemeProvider theme={theme}>
    <GlobalStyle />
    <Page>
      <TitleBar>
        <AppIcon />
        {"Design1 Parallel Fluent@USER-20190303IE  [3d, dp, pbns, lam]"}
        <Spring />
        <WindowButtons>
          <BareButton aria-label="Minimize"><svg width="7" height="7"><path d="M1 3.500h5" stroke="#444" /></svg></BareButton>
          <BareButton aria-label="Restore">
            <svg width="7" height="7" viewBox="0 0 7 7" fill="none" stroke="#222"><path d="M.5 2h4v4.500h-4zM2 2V.5h4.500V5h-2" /></svg>
          </BareButton>
          <BareButton aria-label="Close"><Cross /></BareButton>
        </WindowButtons>
      </TitleBar>
      <Progress>
        <svg width="31" height="7"><path d="M3 3h27" stroke="#47607a" strokeWidth="2.500" /><circle cx="3.500" cy="3" r="3" fill="#2b9fb5" /></svg>
      </Progress>
      <TopEdge />
      <TabBar>
        {tabs.map((t, i) => <Tab key={t} $first={i === 0} $active={t === "Results"}>{t}</Tab>)}
        <BareButton aria-label="Collapse ribbon"><Spring /><Caret up color="#dfe6ec" /></BareButton>
        <Spring />
        <Search>
          <svg width="10" height="10" viewBox="0 0 10 10" fill="none" stroke="#fff" strokeWidth="1.500"><circle cx="4" cy="4" r="3" /><path d="M6 6l3 3" /></svg>
          <input placeholder="Quick Search (Ct···" aria-label="Quick Search" />
        </Search>
        <TabTools>
          <svg width="9" height="9" viewBox="0 0 9 9" fill="none" stroke="#8794a1"><circle cx="4.500" cy="4.500" r="4" /><path d="M3 3.500q1.500-2 3 0L4.500 5v1.500" /></svg>
          <svg width="11" height="11" viewBox="0 0 11 11"><path d="M0 0h11v11H0z" fill="#e9e4d6" /><path d="M3 3h8v8H3z" fill="#97783a" /></svg>
        </TabTools>
        <Brand>AN<b>SYS</b></Brand>
      </TabBar>
      <Ribbon />
      <Body>
        <Outline>
          <OutlineTitle>Outline View</OutlineTitle>
          <OutlineFilter aria-label="Filter outline" />
          <OutlineMain>
            <Tree>
              {upperRows.map(renderRow)}
              <TreeGap />
              {lowerRows.map(renderRow)}
            </Tree>
            <Scrollbar before={122} thumb={291} after={8} />
          </OutlineMain>
          <Scrollbar row before={0} thumb={125} after={8} />
        </Outline>
        <TaskPage />
        <Right>
          <ViewRow>
            <SideTools><ToolButton aria-label="Copy view"><Icon name="pages" /></ToolButton></SideTools>
            <Viewer>
              <Titles>
                <WindowTitle $light><AppIcon />Scaled Residuals<Cross weight={1.5} /></WindowTitle>
                <WindowTitle><AppIcon />mesh-1<Cross weight={1.5} /></WindowTitle>
              </Titles>
              <Stage><MeshScene /></Stage>
              <ViewTools>
                <Pair>
                  <ToolButton $active aria-label="axis"><Icon name="axes" /></ToolButton>
                  <ToolButton aria-label="funnel"><Icon name="funnel" size={12} /></ToolButton>
                </Pair>
                {viewTools.map(t => (
                  <React.Fragment key={t}>
                    <Divider />
                    <ToolButton $active={t === "triad"} aria-label={t}><Icon name={t} size={12} /></ToolButton>
                  </React.Fragment>
                ))}
              </ViewTools>
            </Viewer>
          </ViewRow>
          <Console>
            <PanelBar>
              Console
              <svg width="16" height="8" viewBox="0 0 16 8" fill="none" stroke="#667180">
                <path d="M1 2h4v5H1zM3 2V.5h4V5H5M9 .5h6v7H9zM10.500 2l3 4M13.500 2l-3 4" />
              </svg>
            </PanelBar>
            <ConsoleMain>
              <Output>{output}</Output>
              <ConsoleEdge>
                <Scrollbar before={12} thumb={12} after={4} />
                <svg width="8" height="8" viewBox="0 0 8 8" fill="none" stroke="#222"><path d="M1 4l2 3 4-6" strokeWidth="1.500" /></svg>
              </ConsoleEdge>
            </ConsoleMain>
          </Console>
        </Right>
      </Body>
      <CreateMenu />
      <PlaneDialog />
      <Watermark>
        <svg width="43" height="38" viewBox="0 0 43 38" fill="#fff" stroke="#8c8c8c" strokeWidth=".8">
          <path d="M15 1C7 1 1 6 1 13c0 4 2 7 5 9l-2 6 6-3c2 1 4 1 6 1 8 0 15-5 15-13S24 1 15 1z" />
          <path d="M30 13c-7 0-13 5-13 11s6 11 13 11c2 0 3 0 5-1l5 3-2-5c3-2 5-5 5-8 0-6-6-11-13-11z" />
          <path d="M9 10q1-3 3 0M19 10q1-3 3 0M23 20q1-2 3 0M33 20q1-2 3 0" fill="none" />
        </svg>
        CFD读书笔记
      </Watermark>
      <Marks />
    </Page>
  </ThemeProvider>
);

export default App;
